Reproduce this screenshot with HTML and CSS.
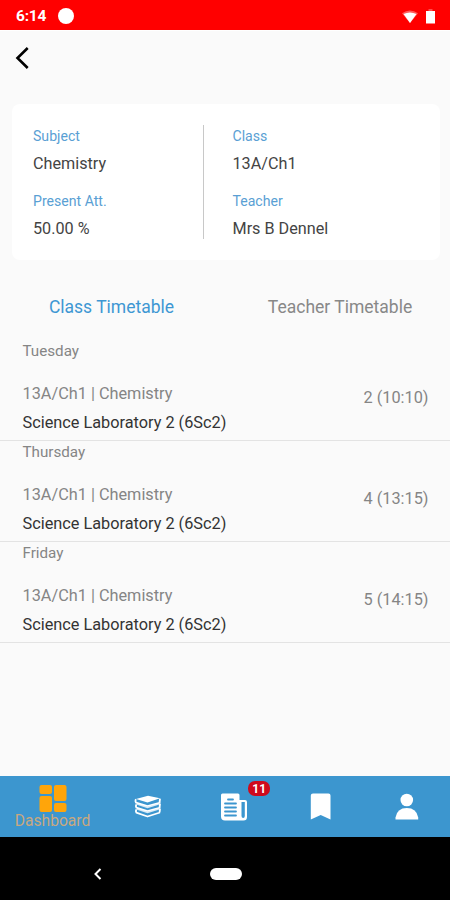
FILE: index.html
```html
<!DOCTYPE html>
<html lang="en">
<head>
  <meta charset="UTF-8">
  <meta name="viewport" content="width=device-width, initial-scale=1">
  <title>Class Timetable</title>
  <link rel="stylesheet" href="styles.css">
</head>
<body>
  <div class="phone">
    <div class="status">
      <span class="time">6:14</span>
      <span class="dot"></span>
      <svg class="wifi" width="16" height="13" viewBox="0 0 16 13">
        <path d="M0 3.2Q8-2.4 16 3.2L8 13z" fill="#fff" opacity=".35"/>
        <path d="M1.5 4Q8 1 14.5 4L8 13z" fill="#fff"/>
      </svg>
      <svg class="battery" width="9" height="15" viewBox="0 0 9 15">
        <path d="M2.5 0h4v2h-4z" fill="#fff" opacity=".3"/>
        <path d="M0 2h9v12.500H0z" fill="#fff"/>
      </svg>
    </div>

    <header class="header">
      <svg width="14" height="24" viewBox="0 0 14 24">
        <path d="M12.700 2L2.500 12l10.200 10" fill="none" stroke="#000" stroke-width="2.600"/>
      </svg>
    </header>

    <div class="card">
      <div class="card-col">
        <div class="label">Subject</div>
        <div class="value">Chemistry</div>
        <div class="label">Present Att.</div>
        <div class="value">50.00 %</div>
      </div>
      <div class="card-col right">
        <div class="label">Class</div>
        <div class="value">13A/Ch1</div>
        <div class="label">Teacher</div>
        <div class="value">Mrs B Dennel</div>
      </div>
    </div>

    <div class="tabs">
      <div class="tab active">Class Timetable</div>
      <div class="tab">Teacher Timetable</div>
    </div>

    <div class="days">
      <section class="day">
        <div class="day-name">Tuesday</div>
        <div class="lesson">
          <div>
            <div class="subject">13A/Ch1 | Chemistry</div>
            <div class="room">Science Laboratory 2 (6Sc2)</div>
          </div>
          <div class="period">2 (10:10)</div>
        </div>
      </section>
      <section class="day">
        <div class="day-name">Thursday</div>
        <div class="lesson">
          <div>
            <div class="subject">13A/Ch1 | Chemistry</div>
            <div class="room">Science Laboratory 2 (6Sc2)</div>
          </div>
          <div class="period">4 (13:15)</div>
        </div>
      </section>
      <section class="day">
        <div class="day-name">Friday</div>
        <div class="lesson">
          <div>
            <div class="subject">13A/Ch1 | Chemistry</div>
            <div class="room">Science Laboratory 2 (6Sc2)</div>
          </div>
          <div class="period">5 (14:15)</div>
        </div>
      </section>
    </div>

    <nav class="nav">
      <div class="nav-item active">
        <svg width="28" height="27" viewBox="0 0 28 27" fill="#ffa50a">
          <rect x="0.500" y="0" width="12.500" height="9" rx="2"/>
          <rect x="0.500" y="11" width="12.500" height="16" rx="2"/>
          <rect x="15" y="0" width="12.500" height="16" rx="2"/>
          <rect x="15" y="18" width="12.500" height="9" rx="2"/>
        </svg>
        <span>Dashboard</span>
      </div>
      <div class="nav-item">
        <svg width="28" height="23" viewBox="0 0 28 23">
          <path d="M2 4L14 .8 26 3.300 13.500 7.500z" fill="#fff"/>
          <path d="M3 8l10.500 3.400L25.500 8v1.500l-12 3.700L3 9.800zM3 13l10.500 3.400L25.500 13v1.500l-12 3.700L3 14.800z" fill="#fff" opacity=".8"/>
          <g fill="none" stroke="#fff" stroke-width="1.800" stroke-linejoin="round">
            <path d="M2 4.300Q1 6 2 7.600L13.500 11 26.500 7.500M26 3.700L25.600 7.400"/>
            <path d="M2.500 9.200Q1.300 11 2.300 12.600L13.500 16 26.500 12.500M26 8.700L25.600 12.400"/>
            <path d="M2.500 14.200Q1.300 16 2.300 17.600L13.500 21.500 26 17.500M26 13.700L25.600 17.400"/>
          </g>
        </svg>
      </div>
      <div class="nav-item">
        <span class="badge">11</span>
        <svg width="28" height="28" viewBox="0 0 28 28">
          <path d="M2.500 .5H18q1.500 0 1.500 1.500v5H25q2 0 2 2v15q0 3.500-3.500 3.500H5q-4 0-4-4V2Q1 .5 2.500 .5z" fill="#fff"/>
          <path d="M21.500 9h3.300v14q0 2-1.600 2t-1.700-2z" fill="#3c96cf"/>
          <path d="M8 6.500h5M5 10.500h11M5 14.500h11M5 18.500h11M5 22.500h11" stroke="#3c96cf" stroke-width="1.800" stroke-linecap="round"/>
        </svg>
      </div>
      <div class="nav-item">
        <svg width="22" height="27" viewBox="0 0 22 27">
          <path d="M3 .5h15.500q2 0 2 2V26.500L10.700 22 .8 26.500v-24q0-2 2.200-2z" fill="#fff"/>
        </svg>
      </div>
      <div class="nav-item">
        <svg width="24" height="27" viewBox="0 0 24 27" fill="#fff">
          <circle cx="11.800" cy="7" r="6.300"/>
          <path d="M.5 26.500V24.500Q2 15 11.800 15T23.200 24.500v2z"/>
        </svg>
      </div>
    </nav>

    <div class="system">
      <svg width="9" height="12" viewBox="0 0 9 12">
        <path d="M7.500 1L2.500 6l5 5" fill="none" stroke="#fff" stroke-width="2"/>
      </svg>
      <span class="pill"></span>
    </div>
  </div>
</body>
</html>
```
FILE: styles.css
```css
* {
  box-sizing: border-box;
}
body {
  margin: 0;
  font-family: Roboto, sans-serif;
  background: #fafafa;
}
svg {
  display: block;
}
.phone {
  display: flex;
  flex-direction: column;
  width: 450px;
  height: 900px;
}
.status {
  display: flex;
  align-items: center;
  height: 30px;
  padding: 2px 15px 0 16px;
  background: #f00;
  color: #fff;
}
.time {
  width: 42px;
  font-size: 15.5px;
  font-weight: 700;
  letter-spacing: -0.2px;
}
.dot {
  width: 16px;
  height: 16px;
  border-radius: 50%;
  background: #fff;
}
.wifi {
  margin-left: auto;
}
.battery {
  margin-left: 8px;
}
.header {
  height: 74px;
  padding: 15px 15px;
  border-top: 1px solid #fff;
}
.card {
  display: flex;
  height: 156px;
  margin: 0 10px 0 12px;
  padding: 21px;
  border-radius: 8px;
  background: #fff;
}
.card-col {
  width: 170px;
}
.card-col.right {
  width: auto;
  padding-left: 28.5px;
  border-left: 1px solid #c8c8c8;
}
.label {
  height: 22px;
  line-height: 22px;
  font-size: 14.1px;
  color: #5a9fd4;
}
.value {
  height: 43.4px;
  line-height: 33px;
  font-size: 16.2px;
  color: #444;
}
.tabs {
  display: flex;
  height: 80px;
  padding-right: 5px;
  line-height: 94px;
  font-size: 17.5px;
  color: #888;
}
.tab {
  flex: 0 0 223px;
  text-align: center;
}
.tab + .tab {
  flex: 1;
  padding-left: 12px;
}
.tab.active {
  color: #3e97d3;
}
.days {
  flex: 1;
}
.day {
  height: 101px;
  border-bottom: 1px solid #e3e3e3;
}
.day-name {
  padding-left: 22.5px;
  line-height: 22px;
  font-size: 15.2px;
  color: #858585;
}
.lesson {
  display: flex;
  justify-content: space-between;
  padding: 18px 21.5px 0 22.5px;
}
.subject {
  line-height: 28px;
  font-size: 16.3px;
  color: #858585;
}
.room {
  line-height: 30px;
  font-size: 16.3px;
  color: #333;
}
.period {
  line-height: 35px;
  font-size: 16.3px;
  color: #858585;
}
.nav {
  display: flex;
  height: 61px;
  background: #3c96cf;
}
.nav-item {
  display: flex;
  flex: 1;
  flex-direction: column;
  align-items: center;
  justify-content: center;
  position: relative;
}
.nav-item.active {
  flex: 0 0 105px;
  padding-top: 2px;
  font-size: 15.6px;
  line-height: 19px;
  color: #c9a880;
}
.badge {
  position: absolute;
  top: 5px;
  left: 57px;
  width: 22px;
  height: 15px;
  border-radius: 7px;
  background: #cf0a1c;
  color: #fff;
  font-size: 12px;
  font-weight: 700;
  line-height: 16px;
  text-align: center;
}
.system {
  display: flex;
  align-items: center;
  height: 63px;
  padding: 11px 0 0 93px;
  background: #000;
}
.pill {
  width: 32px;
  height: 12px;
  margin-left: 108px;
  border-radius: 6px;
  background: #fff;
}
```
